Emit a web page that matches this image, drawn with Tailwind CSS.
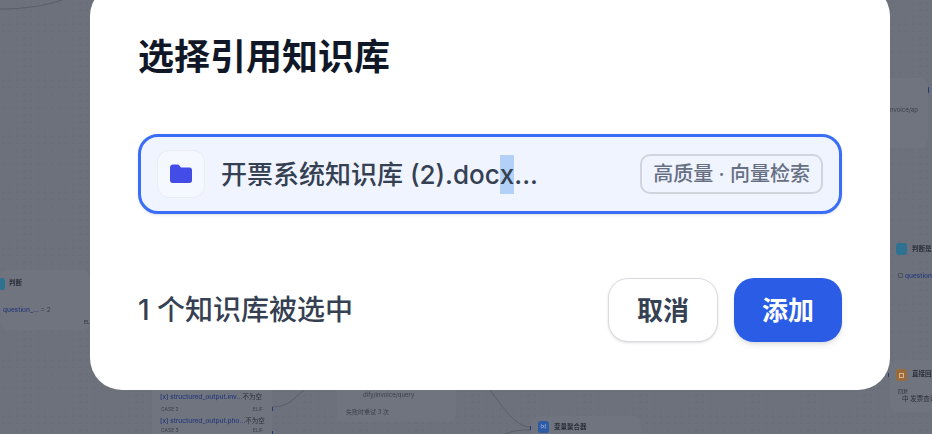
<!DOCTYPE html>
<html lang="zh-CN">
<head>
  <meta charset="UTF-8">
  <title>选择引用知识库</title>
  <script src="https://cdn.jsdelivr.net/npm/@tailwindcss/browser@4"></script>
</head>
<body class="font-['Inter','Noto_Sans_CJK_SC',sans-serif]">

<div class="relative w-[932px] h-[434px] overflow-hidden bg-[#6d717c]">

  <!-- 背景画布 -->
  <div class="absolute inset-0 bg-[radial-gradient(#696d78_1px,transparent_1px)] bg-[size:7px_7px]"></div>
  <div class="absolute inset-0 blur-[0.5px] text-[#2c303a]">
    <svg class="absolute inset-0" width="932" height="434" fill="none" stroke="#5a5e69">
      <path d="M0 9C30 9 50 4 62 0"/>
      <path d="M272 407C290 407 296 396 304 390"/>
      <path d="M490 390C505 410 515 426 530 427"/>
      <path d="M505 434C515 430 522 430 530 430"/>
    </svg>

    <!-- 判断 -->
    <div class="absolute left-0 top-[270px] w-[90px] h-[60px] bg-[#70747e] rounded-lg"></div>
    <div class="absolute left-[-6px] top-[278px] w-[11px] h-[12px] rounded-[3px] bg-[#2f7190]"></div>
    <div class="absolute left-[9px] top-[279px] text-[6.5px] leading-[9px] font-semibold">判断</div>
    <div class="absolute left-[3px] top-[306px] text-[6.5px] leading-[9px] font-medium text-[#25397c] whitespace-nowrap">question_... <span class="text-[#3d414b] font-normal">= 2</span></div>
    <div class="absolute left-[84px] top-[319px] text-[5px] leading-[7px]">ELIF</div>

    <!-- 条件分支 -->
    <div class="absolute left-[152px] top-[380px] w-[120px] h-[60px] bg-[#70747e] rounded-lg"></div>
    <div class="absolute left-[160px] top-[393px] w-[101px] flex justify-between text-[6.5px] leading-[9px] whitespace-nowrap"><span class="text-[#25397c] font-medium">[x] structured_output.inv...</span><span>不为空</span></div>
    <div class="absolute left-[161px] top-[405px] w-[102px] flex justify-between text-[5px] leading-[8px] text-[#3d414b]"><span>CASE 2</span><span>ELIF</span></div>
    <div class="absolute left-[160px] top-[417px] w-[101px] flex justify-between text-[6.5px] leading-[9px] whitespace-nowrap"><span class="text-[#25397c] font-medium">[x] structured_output.pho...</span><span>不为空</span></div>
    <div class="absolute left-[161px] top-[426px] w-[102px] flex justify-between text-[5px] leading-[8px] text-[#3d414b]"><span>CASE 3</span><span>ELIF</span></div>
    <div class="absolute left-[272px] top-[407px] w-px h-[4px] bg-[#25397c]"></div>
    <div class="absolute left-[272px] top-[431px] w-px h-[3px] bg-[#25397c]"></div>

    <!-- HTTP 节点 -->
    <div class="absolute left-[337px] top-[380px] w-[119px] h-[42px] bg-[#70747e] rounded-lg"></div>
    <div class="absolute left-[363px] top-[390px] text-[6px] leading-[9px] text-[#3d414b]">dify/invoice/query</div>
    <div class="absolute left-[346px] top-[407px] text-[6px] leading-[9px] text-[#3d414b]">失败时重试 3 次</div>

    <!-- 变量聚合器 -->
    <div class="absolute left-[531px] top-[416px] w-[110px] h-[30px] bg-[#70747e] rounded-lg"></div>
    <div class="absolute left-[538px] top-[421px] w-[11px] h-[12px] rounded-[3px] bg-[#2d5ba6] flex items-center justify-center text-[5px] text-[#b8c8e6]">(x)</div>
    <div class="absolute left-[554px] top-[423px] text-[6.5px] leading-[9px] font-semibold whitespace-nowrap">变量聚合器</div>
    <div class="absolute left-[530px] top-[426px] w-px h-[4px] bg-[#25397c]"></div>

    <!-- 右侧节点 -->
    <div class="absolute left-[880px] top-[78px] w-[48px] h-[70px] bg-[#70747e] rounded-lg"></div>
    <div class="absolute left-[890px] top-[105px] text-[6px] leading-[9px] text-[#3d414b]">nvoice/ap</div>
    <div class="absolute left-[928px] top-[87px] w-px h-[6px] bg-[#25397c]"></div>
    <div class="absolute left-[896px] top-[243px] w-[11px] h-[12px] rounded-[3px] bg-[#2f7190]"></div>
    <div class="absolute left-[912px] top-[245px] text-[6.5px] leading-[9px] font-semibold whitespace-nowrap">判断是</div>
    <div class="absolute left-[898px] top-[273px] w-[5px] h-[5px] rounded-[1px] border border-[#4a4f5a]"></div>
    <div class="absolute left-[905px] top-[272px] text-[6.5px] leading-[9px] text-[#25397c] font-medium whitespace-nowrap">question_</div>
    <div class="absolute left-[890px] top-[360px] w-[50px] h-[52px] bg-[#70747e] rounded-lg"></div>
    <div class="absolute left-[896px] top-[369px] w-[11px] h-[12px] rounded-[3px] bg-[#9a6a3a] flex items-center justify-center"><div class="w-[5px] h-[5px] border border-[#d6b78f]"></div></div>
    <div class="absolute left-[912px] top-[370px] text-[6.5px] leading-[9px] font-semibold whitespace-nowrap">直接回复</div>
    <div class="absolute left-[898px] top-[388px] text-[5px] leading-[7px]">回复</div>
    <div class="absolute left-[902px] top-[395px] text-[6.5px] leading-[9px] whitespace-nowrap">中 发票查询</div>
    <div class="absolute left-[888px] top-[373px] w-px h-[4px] bg-[#25397c]"></div>
  </div>

  <!-- 弹窗 -->
  <div class="absolute left-[90px] top-[-16px] w-[800px] h-[406px] rounded-[32px] bg-white px-[48px] flex flex-col">
    <h2 class="mt-[49px] text-[36px] leading-[48px] font-semibold text-[#101828] whitespace-nowrap">选择引用知识库</h2>

    <div class="mt-[53px] h-[80px] rounded-[20px] border-[3px] border-[#3b6ef6] bg-[#eff4ff] flex items-center pl-[16px] pr-[16px] shadow-sm">
      <div class="w-[48px] h-[48px] rounded-[12px] bg-[#f5f8ff] border border-[#eaecf5] flex items-center justify-center">
        <svg width="24" height="24" viewBox="0 0 24 24" fill="#444ce7"><path d="M1 5.500C1 3.600 2.300 2.500 4 2.500h4.200c1 0 1.800.4 2.400 1.200L12 5.500h8.500c1.400 0 2.500 1.100 2.500 2.500v10.500c0 1.400-1.100 2.500-2.500 2.500h-17C2.100 21 1 19.900 1 18.500V5.500z"/></svg>
      </div>
      <div class="ml-[16px] text-[26px] leading-[39px] font-medium text-[#354052] whitespace-nowrap">开票系统知识库 (2).doc<span class="inline-block h-[39px] bg-[#b2d0f8]">x</span>...</div>
      <div class="ml-auto h-[40px] px-[11px] rounded-[10px] border-2 border-[#d0d5dd] flex items-center text-[20px] font-medium text-[#676f83] whitespace-nowrap">高质量 · 向量检索</div>
    </div>

    <div class="mt-[64px] flex items-center">
      <div class="text-[28px] leading-[40px] font-medium text-[#354052] whitespace-nowrap">1 个知识库被选中</div>
      <button class="ml-auto w-[110px] h-[64px] rounded-[20px] border border-[#d9dbe0] bg-white text-[26px] font-semibold text-[#354052] shadow-sm">取消</button>
      <button class="ml-[16px] w-[108px] h-[64px] rounded-[20px] bg-[#2b5ce6] text-[26px] font-semibold text-white shadow-md">添加</button>
    </div>
  </div>

</div>

</body>
</html>
